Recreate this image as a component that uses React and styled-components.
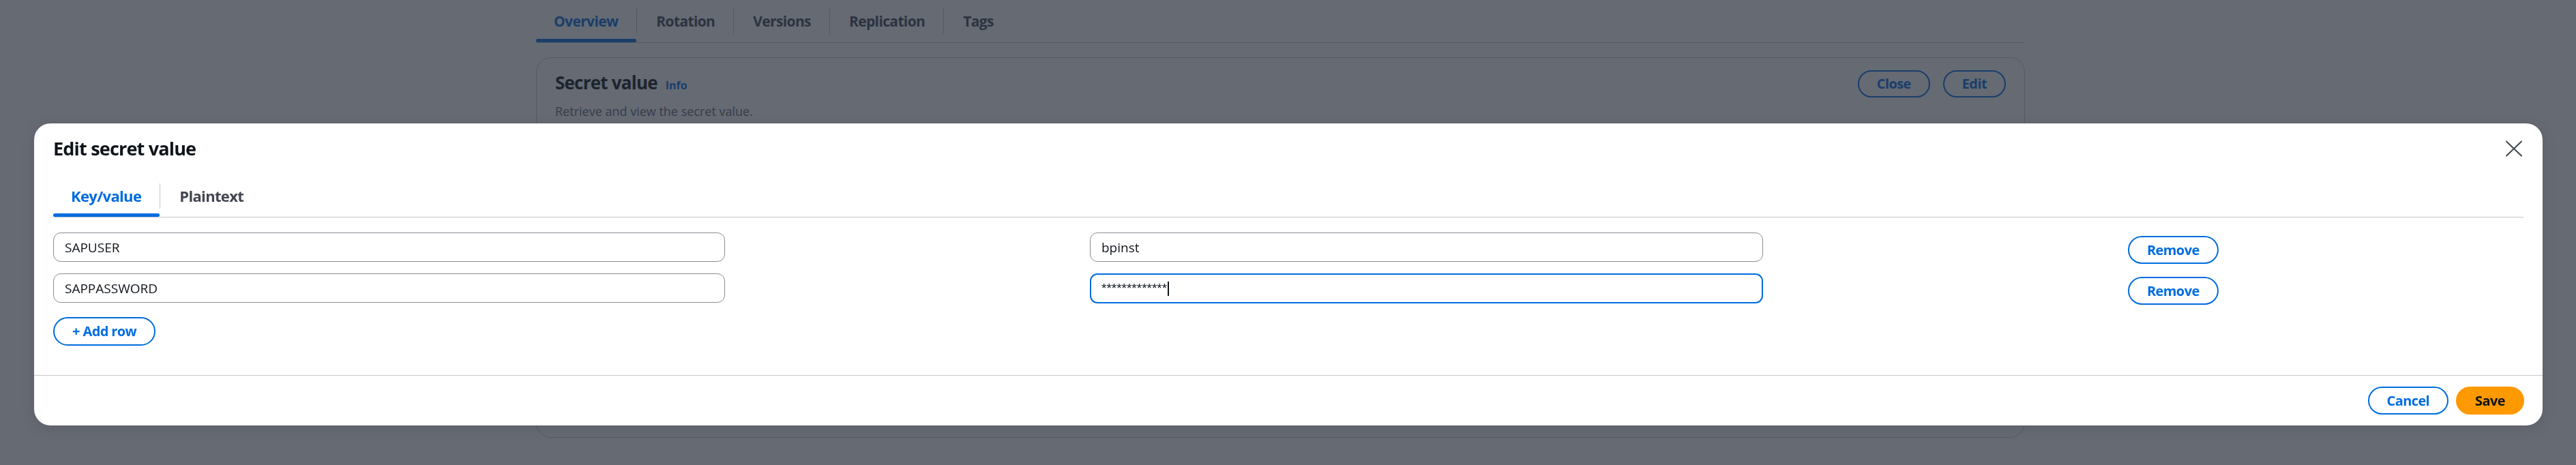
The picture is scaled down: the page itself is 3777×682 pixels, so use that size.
import React from 'react';
import styled, { createGlobalStyle } from 'styled-components';

const GlobalStyle = createGlobalStyle`
  html, body {
    margin: 0;
    padding: 0;
  }
  body {
    width: 3777px;
    height: 682px;
    overflow: hidden;
    background: #ffffff;
    font-family: 'Open Sans', 'Noto Sans', sans-serif;
    color: #0f141a;
  }
  * {
    box-sizing: border-box;
  }
`;

const BLUE = '#006ce0';
const DIVIDER = '#c6c6cd';
const TIGHT = '-0.03em'; // Open Sans runs wider than the console font

// Page behind the modal
const Page = styled.div`
  padding: 13px 0 0 786px;
`;

const Console = styled.div`
  width: 2183px;
`;

const TabList = styled.div`
  display: flex;
  border-bottom: 1px solid ${DIVIDER};
  margin: ${p => p.$margin || '0'};
`;

const Tab = styled.div`
  position: relative;
  display: flex;
  padding-bottom: 12px;

  &::after {
    content: '';
    position: absolute;
    left: 0;
    right: 1px;
    bottom: 0;
    height: 5px;
    border-radius: 3px;
    background: ${p => (p.$active ? p.$accent : 'transparent')};
  }
`;

const TabLabel = styled.span`
  padding: 0 27px 0 ${p => (p.$first ? 26 : 28)}px;
  line-height: 37px;
  font-size: ${p => p.$size}px;
  font-weight: 700;
  letter-spacing: ${TIGHT};
  white-space: nowrap;
  color: ${p => (p.$active ? p.$accent : '#424650')};
  border-right: ${p => (p.$last ? 'none' : `1px solid ${DIVIDER}`)};
`;

const Card = styled.section`
  margin-top: 21px;
  height: 558px;
  border: 1px solid ${DIVIDER};
  border-radius: 22px;
  padding: 18px 27px;
`;

const CardHeader = styled.div`
  display: flex;
  align-items: center;
  justify-content: space-between;
`;

const CardTitle = styled.h2`
  margin: 0;
  font-size: 26px;
  line-height: 36px;
  font-weight: 700;
  letter-spacing: ${TIGHT};
  color: #0f141a;
`;

const InfoLink = styled.a`
  margin-left: 12px;
  font-size: 16px;
  font-weight: 700;
  letter-spacing: 0;
  color: ${BLUE};
`;

const CardDescription = styled.p`
  margin: 8px 0 0;
  font-size: 18px;
  line-height: 24px;
  color: #656871;
`;

const Actions = styled.div`
  display: flex;
  gap: ${p => p.$gap}px;
`;

const Button = styled.button`
  display: flex;
  align-items: center;
  justify-content: center;
  width: fit-content;
  height: ${p => p.$h || 41}px;
  padding: 0 ${p => p.$px || 26}px;
  margin-top: ${p => p.$mt || 0}px;
  align-self: ${p => (p.$start ? 'start' : 'auto')};
  border-radius: 999px;
  border: 2px solid ${p => (p.$primary ? '#ff9900' : BLUE)};
  background: ${p => (p.$primary ? '#ff9900' : '#ffffff')};
  color: ${p => (p.$primary ? '#0f141a' : BLUE)};
  font-family: inherit;
  font-size: 20px;
  font-weight: 700;
  letter-spacing: ${TIGHT};
  line-height: 1;
  white-space: nowrap;
  cursor: pointer;
`;

// Modal
const Overlay = styled.div`
  position: fixed;
  inset: 0;
  background: rgba(35, 43, 55, 0.7);
  display: flex;
  align-items: flex-start;
  justify-content: center;
  padding: 181px 49px 0 50px;
`;

const Modal = styled.div`
  width: 100%;
  background: #ffffff;
  border-radius: 24px;
  box-shadow: 0 4px 20px 1px rgba(0, 7, 22, 0.1);
  overflow: hidden;
`;

const ModalHeader = styled.header`
  display: flex;
  align-items: center;
  justify-content: space-between;
  padding: 19px 28px 0;
`;

const ModalTitle = styled.h2`
  margin: 0;
  font-size: 27px;
  line-height: 36px;
  font-weight: 700;
  letter-spacing: ${TIGHT};
  color: #0f141a;
`;

const CloseButton = styled.button`
  border: 0;
  background: none;
  padding: 0;
  width: 28px;
  height: 28px;
  display: flex;
  color: #424650;
  cursor: pointer;
`;

const ModalBody = styled.div`
  padding: 22px 28px 43px;
`;

const KVGrid = styled.div`
  display: grid;
  grid-template-columns: 985px 987px auto;
  column-gap: 535px;
  row-gap: 14px;
  align-items: start;
  justify-items: start;
`;

const Field = styled.div`
  width: 100%;
  height: ${p => (p.$focused ? 44 : 43)}px;
  display: flex;
  align-items: center;
  padding: 0 ${p => (p.$focused ? 15 : 16)}px;
  border: ${p => (p.$focused ? `2px solid ${BLUE}` : '1px solid #8c8c94')};
  border-radius: 11px;
  font-size: 19px;
  color: #0f141a;
  background: #ffffff;
`;

const Masked = styled.span`
  font-family: 'Liberation Sans', Arial, sans-serif;
  font-size: 19px;
`;

const Caret = styled.span`
  display: inline-block;
  width: 2px;
  height: 21px;
  background: #0f141a;
  margin-left: 1px;
`;

const ModalFooter = styled.footer`
  display: flex;
  justify-content: flex-end;
  gap: 11px;
  padding: 16px 27px;
  border-top: 1px solid ${DIVIDER};
`;

const pageTabs = ['Overview', 'Rotation', 'Versions', 'Replication', 'Tags'];
const modalTabs = ['Key/value', 'Plaintext'];

const rows = [
  { key: 'SAPUSER', value: 'bpinst' },
  { key: 'SAPPASSWORD', value: '*************', focused: true },
];

function Tabs({ items, size, accent, margin }) {
  return (
    <TabList $margin={margin}>
      {items.map((t, i) => (
        <Tab key={t} $active={i === 0} $accent={accent}>
          <TabLabel
            $size={size}
            $accent={accent}
            $active={i === 0}
            $first={i === 0}
            $last={i === items.length - 1}
          >
            {t}
          </TabLabel>
        </Tab>
      ))}
    </TabList>
  );
}

function CloseIcon() {
  return (
    <svg width="28" height="28" viewBox="0 0 28 28" fill="none">
      <path d="M3 3.5L25 24.5M25 3.5L3 24.5" stroke="currentColor" strokeWidth="2" strokeLinecap="round" />
    </svg>
  );
}

export default function App() {
  return (
    <>
      <GlobalStyle />
      <Page>
        <Console>
          <Tabs items={pageTabs} size={21} accent={BLUE} />
          <Card>
            <CardHeader>
              <CardTitle>
                Secret value<InfoLink>Info</InfoLink>
              </CardTitle>
              <Actions $gap={19}>
                <Button $h={40}>Close</Button>
                <Button $h={40}>Edit</Button>
              </Actions>
            </CardHeader>
            <CardDescription>Retrieve and view the secret value.</CardDescription>
          </Card>
        </Console>
      </Page>

      <Overlay>
        <Modal role="dialog" aria-label="Edit secret value">
          <ModalHeader>
            <ModalTitle>Edit secret value</ModalTitle>
            <CloseButton aria-label="Close modal">
              <CloseIcon />
            </CloseButton>
          </ModalHeader>
          <Tabs items={modalTabs} size={22} accent={BLUE} margin="33px 28px 0" />
          <ModalBody>
            <KVGrid>
              {rows.map(r => (
                <React.Fragment key={r.key}>
                  <Field>{r.key}</Field>
                  <Field $focused={r.focused}>
                    {r.focused ? (
                      <>
                        <Masked>{r.value}</Masked>
                        <Caret />
                      </>
                    ) : (
                      r.value
                    )}
                  </Field>
                  <Button $start $mt={5} $h={41}>Remove</Button>
                </React.Fragment>
              ))}
            </KVGrid>
            <Button $h={42} $mt={18}>+ Add row</Button>
          </ModalBody>
          <ModalFooter>
            <Button>Cancel</Button>
            <Button $primary>Save</Button>
          </ModalFooter>
        </Modal>
      </Overlay>
    </>
  );
}
